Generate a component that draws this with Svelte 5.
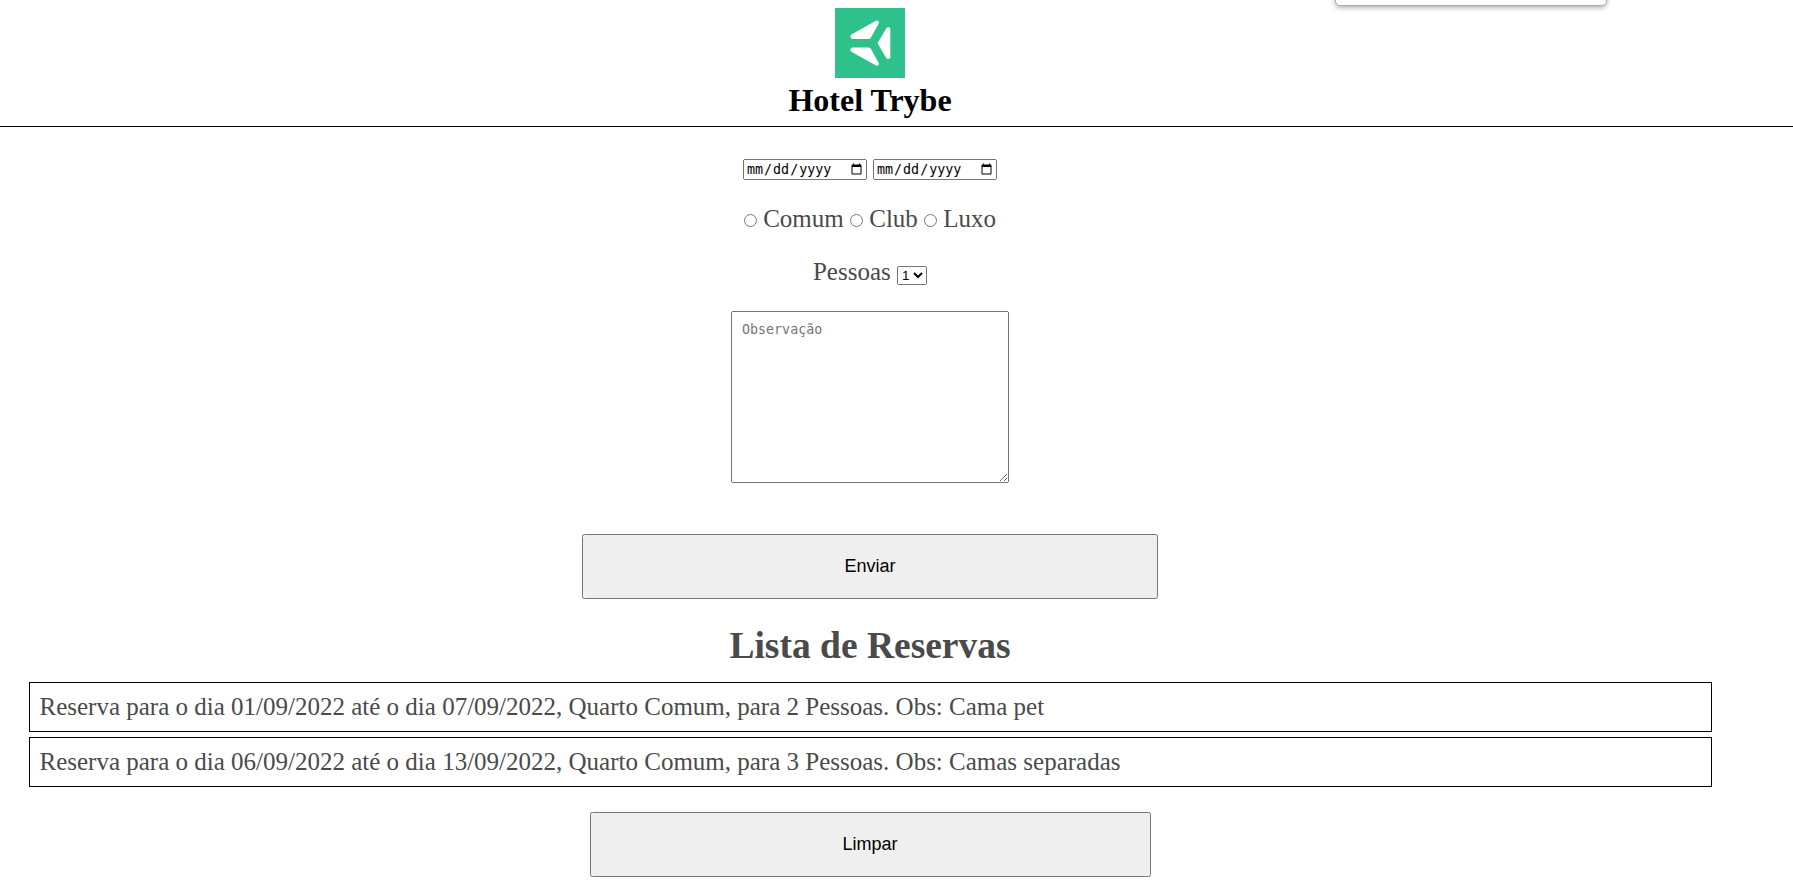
<script>
  const rooms = ['Comum', 'Club', 'Luxo'];
  const bookings = [
    { from: '01/09/2022', to: '07/09/2022', room: 'Comum', people: 2, note: 'Cama pet' },
    { from: '06/09/2022', to: '13/09/2022', room: 'Comum', people: 3, note: 'Camas separadas' }
  ];
</script>

<div class="popup"></div>
<header>
  <div class="center">
    <svg class="logo" width="70" height="70" viewBox="0 0 70 70">
      <rect width="70" height="70" fill="#2fc18c" />
      <g fill="#fff">
        <path d="M16.4 26.6 L41 12.8 Q43.8 11.8 44 15 L36 29.5 Q35.2 31 33.5 31 L17 31 Q14 29 16.4 26.6Z" />
        <path transform="matrix(1 0 0 -1 0 70.4)" d="M16.4 26.6 L41 12.8 Q43.8 11.8 44 15 L36 29.5 Q35.2 31 33.5 31 L17 31 Q14 29 16.4 26.6Z" />
        <path d="M43.1 34.2 L51.3 20.3 Q53 18.4 55.3 20.3 V50.1 Q53 52 51.3 50.1 L43.1 36.2 Q42.7 35.2 43.1 34.2Z" />
      </g>
    </svg>
    <h1>Hotel Trybe</h1>
  </div>
</header>
<main>
  <form>
    <div class="dates"><input type="date" /> <input type="date" /></div>
    <div class="rooms">
      {#each rooms as room}
        <input type="radio" name="room" id={room} value={room} />{' '}<label for={room}>{room}</label>{' '}
      {/each}
    </div>
    <div class="people">
      <label for="people">Pessoas</label>
      <select id="people"><option>1</option><option>2</option><option>3</option><option>4</option></select>
    </div>
    <textarea placeholder="Observação"></textarea>
    <button class="send" type="button">Enviar</button>
  </form>
  <h2>Lista de Reservas</h2>
  <ul>
    {#each bookings as b}
      <li>Reserva para o dia {b.from} até o dia {b.to}, Quarto {b.room}, para {b.people} Pessoas. Obs: {b.note}</li>
    {/each}
  </ul>
  <button class="clear" type="button">Limpar</button>
</main>

<style>
  :global(body) {
    margin: 0;
    background: #fff;
    font-family: 'Liberation Serif', serif;
    overflow: hidden;
  }
  .popup {
    position: absolute;
    box-sizing: border-box;
    left: 1335px;
    top: -20px;
    width: 272px;
    height: 26px;
    border: 1px solid #aaa;
    border-radius: 5px;
    box-shadow: 0 2px 5px rgba(0, 0, 0, 0.3);
  }
  header {
    box-sizing: border-box;
    height: 127px;
    padding-top: 8px;
    border-bottom: 1px solid #000;
  }
  .center {
    width: 1740px;
    display: flex;
    flex-direction: column;
    align-items: center;
  }
  .logo { display: block; }
  h1 {
    margin: 4px 0 0;
    font-size: 32px;
    line-height: 37px;
    color: #000;
  }
  main {
    width: 1683px;
    margin-left: 28.5px;
    color: #4a4a4a;
    font-size: 25px;
    display: flex;
    flex-direction: column;
    align-items: center;
  }
  form {
    display: flex;
    flex-direction: column;
    align-items: center;
  }
  .dates {
    height: 21px;
    margin-top: 32px;
    display: flex;
    gap: 6px;
  }
  .dates input {
    box-sizing: border-box;
    width: 124px;
    height: 21px;
    margin: 0;
    padding-left: 1px;
    font: 13.333px 'DejaVu Sans Mono', monospace;
  }
  .rooms {
    height: 28px;
    margin-top: 25px;
    line-height: 28px;
    white-space: nowrap;
  }
  .rooms input { margin: 3px 0 0; }
  .people {
    height: 28px;
    margin-top: 25px;
    line-height: 28px;
  }
  select {
    font: 13.333px 'Liberation Sans', sans-serif;
    margin: 0;
  }
  textarea {
    box-sizing: border-box;
    width: 278px;
    height: 172px;
    margin: 25px 0 0;
    padding: 10px;
    font: 13.333px 'DejaVu Sans Mono', monospace;
  }
  button {
    box-sizing: border-box;
    height: 65px;
    padding: 0;
    font: 18px 'Liberation Sans', sans-serif;
  }
  .send {
    width: 576px;
    margin: 51px 0 0;
  }
  h2 {
    margin: 26px 0 0;
    font-size: 37.5px;
    line-height: 42px;
  }
  ul {
    align-self: stretch;
    list-style: none;
    margin: 15px 0 0;
    padding: 0;
    display: flex;
    flex-direction: column;
    gap: 5px;
  }
  li {
    box-sizing: border-box;
    height: 50px;
    padding: 10px;
    border: 1px solid #000;
    line-height: 28px;
  }
  .clear {
    width: 561px;
    margin: 25px 0 0;
  }
</style>
